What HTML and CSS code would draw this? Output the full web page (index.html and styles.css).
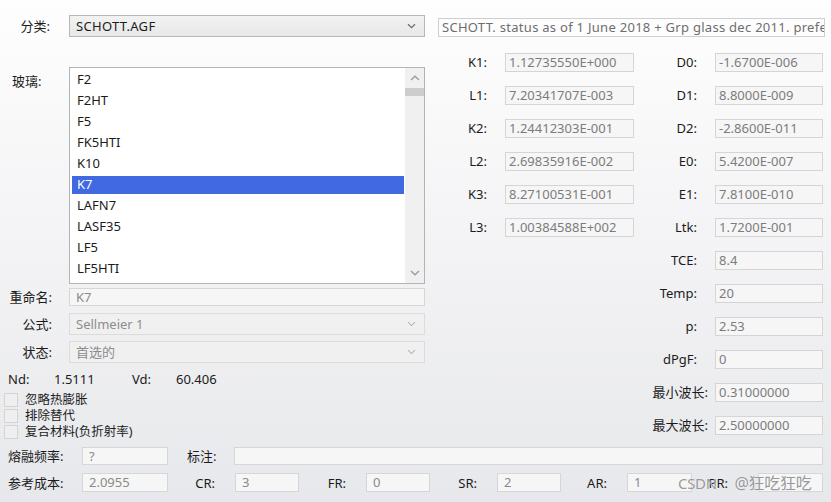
FILE: index.html
```html
<!DOCTYPE html>
<html lang="zh-CN">
<head>
<meta charset="utf-8">
<title>Glass Catalog</title>
<link rel="stylesheet" href="styles.css">
</head>
<body>
<div class="top">
  <div class="left">
    <div class="row row-cat">
      <span class="lbl lbl-cat">分类:</span>
      <div class="select enabled">
        <span class="cat-val">SCHOTT.AGF</span>
        <svg class="chev" width="9" height="6" viewBox="0 0 9 6"><path d="M1 1.2 L4.5 4.6 L8 1.2" fill="none" stroke="#6a6a6a" stroke-width="1.2"/></svg>
      </div>
    </div>
    <div class="row row-glass">
      <span class="lbl lbl-glass">玻璃:</span>
      <div class="listbox">
        <ul class="items">
          <li>F2</li>
          <li>F2HT</li>
          <li>F5</li>
          <li>FK5HTI</li>
          <li>K10</li>
          <li class="sel">K7</li>
          <li>LAFN7</li>
          <li>LASF35</li>
          <li>LF5</li>
          <li>LF5HTI</li>
        </ul>
        <div class="scrollbar">
          <div class="sbtn"><svg width="10" height="6" viewBox="0 0 10 6"><path d="M1 5 L5 1.2 L9 5" fill="none" stroke="#9a9a9a" stroke-width="1.2"/></svg></div>
          <div class="track"><div class="thumb"></div></div>
          <div class="sbtn"><svg width="10" height="6" viewBox="0 0 10 6"><path d="M1 1 L5 4.8 L9 1" fill="none" stroke="#9a9a9a" stroke-width="1.2"/></svg></div>
        </div>
      </div>
    </div>
    <div class="row row-rename">
      <span class="lbl">重命名:</span>
      <div class="field wide">K7</div>
    </div>
    <div class="row row-formula">
      <span class="lbl">公式:</span>
      <div class="select disabled">
        <span>Sellmeier 1</span>
        <svg class="chev" width="9" height="6" viewBox="0 0 9 6"><path d="M1 1.2 L4.5 4.6 L8 1.2" fill="none" stroke="#b5b5b5" stroke-width="1.1"/></svg>
      </div>
    </div>
    <div class="row row-status">
      <span class="lbl">状态:</span>
      <div class="select disabled">
        <span>首选的</span>
        <svg class="chev" width="9" height="6" viewBox="0 0 9 6"><path d="M1 1.2 L4.5 4.6 L8 1.2" fill="none" stroke="#b5b5b5" stroke-width="1.1"/></svg>
      </div>
    </div>
    <div class="ndrow">
      <span class="nd-l">Nd:</span>
      <span class="nd-v">1.5111</span>
      <span class="vd-l">Vd:</span>
      <span>60.406</span>
    </div>
    <div class="checks">
      <label class="chk"><span class="box"></span><span class="chk-t">忽略热膨胀</span></label>
      <label class="chk"><span class="box"></span><span class="chk-t">排除替代</span></label>
      <label class="chk"><span class="box"></span><span class="chk-t">复合材料(负折射率)</span></label>
    </div>
  </div>
  <div class="right">
    <div class="desc">SCHOTT. status as of 1 June 2018 + Grp glass dec 2011. preferred glasses</div>
    <div class="params">
      <span class="plbl">K1:</span><div class="pfield">1.12735550E+000</div>
      <span class="plbl">D0:</span><div class="pfield">-1.6700E-006</div>
      <span class="plbl">L1:</span><div class="pfield">7.20341707E-003</div>
      <span class="plbl">D1:</span><div class="pfield">8.8000E-009</div>
      <span class="plbl">K2:</span><div class="pfield">1.24412303E-001</div>
      <span class="plbl">D2:</span><div class="pfield">-2.8600E-011</div>
      <span class="plbl">L2:</span><div class="pfield">2.69835916E-002</div>
      <span class="plbl">E0:</span><div class="pfield">5.4200E-007</div>
      <span class="plbl">K3:</span><div class="pfield">8.27100531E-001</div>
      <span class="plbl">E1:</span><div class="pfield">7.8100E-010</div>
      <span class="plbl">L3:</span><div class="pfield">1.00384588E+002</div>
      <span class="plbl">Ltk:</span><div class="pfield">1.7200E-001</div>
      <span class="plbl solo">TCE:</span><div class="pfield">8.4</div>
      <span class="plbl solo">Temp:</span><div class="pfield">20</div>
      <span class="plbl solo">p:</span><div class="pfield">2.53</div>
      <span class="plbl solo">dPgF:</span><div class="pfield">0</div>
      <span class="plbl solo long">最小波长:</span><div class="pfield">0.31000000</div>
      <span class="plbl solo long">最大波长:</span><div class="pfield">2.50000000</div>
    </div>
  </div>
</div>
<div class="brow brow-1">
  <span class="blbl first">熔融频率:</span>
  <div class="field f86">?</div>
  <span class="blbl note">标注:</span>
  <div class="field fnote"></div>
</div>
<div class="brow brow-2">
  <span class="blbl first">参考成本:</span>
  <div class="field f86">2.0955</div>
  <span class="blbl r">CR:</span>
  <div class="field f64">3</div>
  <span class="blbl r">FR:</span>
  <div class="field f64">0</div>
  <span class="blbl r">SR:</span>
  <div class="field f64">2</div>
  <span class="blbl r r66">AR:</span>
  <div class="field f65">1</div>
  <span class="blbl r r66 pr">PR:</span>
  <div class="field f65"></div>
</div>
<div class="watermark">CSDN <span class="wm-at">@狂吃狂吃</span></div>
</body>
</html>
```

FILE: styles.css
```css
* {
  box-sizing: border-box;
}

html,
body {
  margin: 0;
  padding: 0;
}

body {
  width: 831px;
  height: 502px;
  overflow: hidden;
  position: relative;
  background: linear-gradient(#fefefe 0%, #f4f4f6 45%, #e7e8eb 100%);
  font-family: "Noto Sans", "Noto Sans CJK SC", sans-serif;
  font-size: 13px;
  line-height: 18px;
  color: #1b1b1b;
}

.top {
  display: flex;
}

.left {
  width: 430px;
  flex: none;
  padding-top: 15px;
}

.row {
  display: flex;
  align-items: center;
}

.lbl {
  width: 69px;
  flex: none;
  text-align: right;
  padding-right: 17px;
  white-space: nowrap;
}

.lbl-cat {
  padding-right: 19px;
}

.lbl-glass {
  align-self: flex-start;
  text-align: left;
  padding-left: 12px;
  margin-top: 4px;
  line-height: 21px;
}

.select {
  width: 356px;
  height: 22px;
  display: flex;
  align-items: center;
  justify-content: space-between;
  padding: 0 8px 0 6px;
  border: 1px solid #c8c8c8;
}

.select.enabled {
  background: linear-gradient(#f2f2f2, #e8e8e8);
  border-color: #b8b8b8;
  color: #1b1b1b;
}

.cat-val {
  letter-spacing: 0.3px;
}

.select.disabled {
  background: #f0f0f1;
  border-color: #dcdcdc;
  color: #8c8c8c;
}

.chev {
  flex: none;
}

.row-cat {
  height: 22px;
  margin-bottom: 30px;
}

.listbox {
  width: 356px;
  height: 217px;
  border: 1px solid #b3b3b3;
  background: #ffffff;
  display: flex;
}

.items {
  list-style: none;
  margin: 0;
  padding: 1px 0 0 0;
  flex: 1;
}

.items li {
  height: 21px;
  line-height: 21px;
  margin: 0 1px 0 2px;
  padding-left: 5px;
  color: #1b1b1b;
}

.items li.sel {
  color: #ffffff;
  background: linear-gradient(#4169e1, #4169e1) center / 100% 18px no-repeat;
}

.scrollbar {
  width: 19px;
  flex: none;
  background: #f0f0f0;
  display: flex;
  flex-direction: column;
}

.sbtn {
  height: 20px;
  display: flex;
  align-items: center;
  justify-content: center;
}

.track {
  flex: 1;
}

.thumb {
  height: 8px;
  background: #cdcdcd;
}

.field {
  height: 18px;
  border: 1px solid #d6d6d6;
  background: #f6f6f7;
  color: #8a8a8a;
  padding-left: 6px;
  line-height: 16px;
  white-space: nowrap;
  overflow: hidden;
}

.field.wide {
  width: 356px;
}

.row-rename {
  margin-top: 4px;
  height: 18px;
}

.row-formula {
  margin-top: 7px;
}

.row-status {
  margin-top: 6px;
}

.ndrow {
  margin-top: 6px;
  height: 20px;
  line-height: 20px;
  display: flex;
  padding-left: 8px;
}

.nd-l {
  width: 46px;
}

.nd-v {
  width: 78px;
}

.vd-l {
  width: 44px;
}

.checks {
  padding-top: 3px;
}

.chk {
  display: flex;
  align-items: center;
  height: 16px;
  padding-left: 4px;
}

.chk-t {
  display: block;
  height: 16px;
  line-height: 16px;
  font-size: 12.5px;
}

.box {
  width: 14px;
  height: 14px;
  border: 1px solid #d4d4d4;
  background: #efeff0;
  margin-right: 7px;
  flex: none;
}

.right {
  flex: 1;
  padding-top: 18px;
}

.desc {
  margin-left: 8px;
  width: 387px;
  height: 19px;
  border: 1px solid #cfcfcf;
  background: #fdfdfd;
  color: #6e6e6e;
  padding-left: 3px;
  line-height: 17px;
  letter-spacing: 0.28px;
  white-space: nowrap;
  overflow: hidden;
}

.params {
  margin-top: 16px;
  display: grid;
  grid-template-columns: 75px 129px 81px 108px;
  grid-auto-rows: 19px;
  row-gap: 14px;
}

.plbl {
  text-align: right;
  padding-right: 18px;
  line-height: 19px;
  white-space: nowrap;
}

.plbl.solo {
  grid-column: 3;
}

.plbl.long {
  padding-right: 7px;
}

.pfield {
  border: 1px solid #d5d5d5;
  background: #f6f6f7;
  color: #7c7c7c;
  padding-left: 3px;
  line-height: 17px;
  white-space: nowrap;
  overflow: hidden;
}

.brow {
  display: flex;
  align-items: center;
}

.brow-1 {
  margin-top: 7px;
  height: 18px;
}

.brow-2 {
  margin-top: 8px;
  height: 19px;
}

.brow-2 .field {
  height: 19px;
  line-height: 17px;
}

.blbl {
  flex: none;
  white-space: nowrap;
}

.blbl.first {
  width: 82px;
  padding-left: 8px;
}

.blbl.note {
  width: 66px;
  padding-left: 19px;
}

.blbl.r {
  width: 67px;
  text-align: right;
  padding-right: 20px;
}

.blbl.r66 {
  width: 66px;
}

.blbl.pr {
  padding-right: 30px;
}

.field.f86 {
  width: 86px;
}

.field.f64 {
  width: 64px;
}

.field.f65 {
  width: 65px;
}

.field.fnote {
  width: 589px;
}

.watermark {
  position: absolute;
  left: 678px;
  top: 472px;
  font-size: 15px;
  line-height: 22px;
  color: rgba(125, 125, 125, 0.8);
  text-shadow: 0 0 1px #ffffff;
  white-space: nowrap;
  letter-spacing: -0.3px;
}

.wm-at {
  margin-left: 14px;
  font-size: 16px;
}
```
